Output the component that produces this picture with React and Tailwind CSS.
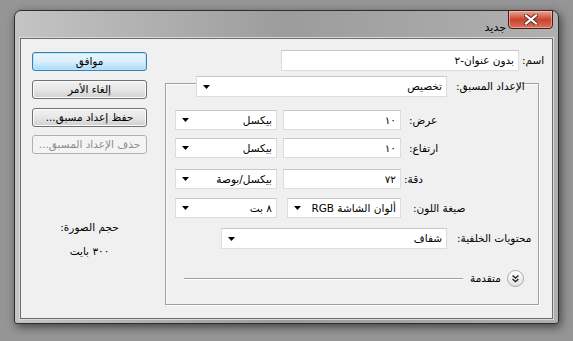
import React from "react";

const Arrow = () => (
  <svg width="7" height="4" viewBox="0 0 7 4" className="shrink-0">
    <path d="M0 0h7L3.5 4z" fill="#000" />
  </svg>
);

function Select({ className = "", value }) {
  return (
    <div
      className={`h-[20px] bg-white border border-[#dcdcdc] border-t-[#c8c8c8] flex items-center pl-[6px] pr-[4px] shrink-0 overflow-hidden ${className}`}
    >
      <Arrow />
      <span dir="rtl" className="flex-1 text-right whitespace-nowrap">
        {value}
      </span>
    </div>
  );
}

function Input({ className = "", value }) {
  return (
    <div
      className={`h-[20px] bg-white border border-[#dcdcdc] border-t-[#c8c8c8] flex items-center justify-end pr-[4px] shrink-0 ${className}`}
    >
      <span dir="rtl" className="whitespace-nowrap">
        {value}
      </span>
    </div>
  );
}

function Btn({ children, primary, disabled, className = "" }) {
  const look = primary
    ? "border-[#3c7fb1] bg-gradient-to-b from-[#eaf6fd] via-[#d9f0fc] to-[#a7d9f5] shadow-[inset_0_0_0_1px_#b7e4fb]"
    : disabled
    ? "border-[#adb2b5] bg-[#f4f4f4] text-[#8c8c8c]"
    : "border-[#707070] bg-gradient-to-b from-[#f2f2f2] via-[#e6e6e6] to-[#d0d0d0] shadow-[inset_0_0_0_1px_#fcfcfc]";
  return (
    <div
      dir="rtl"
      className={`w-[115px] h-[19px] rounded-[3px] border flex items-center justify-center ${look} ${className}`}
    >
      {children}
    </div>
  );
}

export default function App() {
  return (
    <div className="w-[573px] h-[341px] bg-[#959595] pl-[14px] pt-[10px] font-['DejaVu_Sans',sans-serif] text-[10.5px] text-black leading-none overflow-hidden">
      <div className="w-[545px] h-[314px] rounded-t-[7px] rounded-b-[3px] border border-[#2e2e2e] bg-gradient-to-r from-[#c4c4c4] via-[#9c9c9c] to-[#b0b0b0] shadow-[2px_3px_10px_rgba(0,0,0,0.55)] flex flex-col">
        {/* title bar */}
        <div className="h-[27px] flex justify-end items-start pr-[5px]">
          <span dir="rtl" className="mt-[11px] mr-[2px] text-[11px]">
            جديد
          </span>
          <div className="-mt-[1px] w-[45px] h-[19px] rounded-b-[4px] border border-[#4a1a14] bg-gradient-to-b from-[#e8a497] via-[#c9432f] to-[#d8705c] shadow-[inset_0_0_0_1px_rgba(255,220,210,0.5)] flex items-center justify-center">
            <svg width="14" height="11" viewBox="0 0 14 11">
              <path d="M2 1.5l10 8M12 1.5l-10 8" stroke="#5a2a22" strokeWidth="4" strokeLinecap="square" />
              <path d="M2 1.5l10 8M12 1.5l-10 8" stroke="#fff" strokeWidth="2.2" strokeLinecap="square" />
            </svg>
          </div>
        </div>

        {/* client area */}
        <div className="ml-[5px] mb-[4px] w-[533px] flex-1 border border-[#6e6e6e] bg-[#f0f0f0] shadow-[0_0_0_1px_#d8d8d8] flex">
          {/* left column */}
          <div className="ml-[11px] w-[115px] flex flex-col items-center">
            <Btn primary className="mt-[13px]">موافق</Btn>
            <Btn className="mt-[9px]">إلغاء الأمر</Btn>
            <Btn className="mt-[9px]">حفظ إعداد مسبق...</Btn>
            <Btn disabled className="mt-[8px]">حذف الإعداد المسبق...</Btn>
            <span dir="rtl" className="mt-[68px]">حجم الصورة:</span>
            <span dir="rtl" className="mt-[13px]">٣٠٠ بايت</span>
          </div>

          {/* right area */}
          <div className="ml-[18px] w-[375px] flex flex-col">
            <div className="mt-[11px] flex items-center">
              <Input className="ml-[116px] w-[238px] h-[21px]" value="بدون عنوان-٢" />
              <span dir="rtl" className="ml-[3px]">اسم:</span>
            </div>

            <div className="mt-[12px] w-[374px] h-[222px] border border-[#a0a0a0] shadow-[inset_1px_1px_0_#fff,1px_1px_0_#fff] flex flex-col">
              {/* legend */}
              <div className="-mt-[8px] ml-[30px] w-[326px] bg-[#f0f0f0] flex items-center">
                <Select className="w-[251px] h-[21px]" value="تخصيص" />
                <span dir="rtl" className="ml-[9px] whitespace-nowrap">الإعداد المسبق:</span>
              </div>

              <div className="ml-[9px] mt-[13px] flex items-center">
                <Select className="w-[102px]" value="بيكسل" />
                <Input className="ml-[6px] w-[118px]" value="١٠" />
                <span dir="rtl" className="ml-[8px]">عرض:</span>
              </div>
              <div className="ml-[9px] mt-[8px] flex items-center">
                <Select className="w-[102px]" value="بيكسل" />
                <Input className="ml-[6px] w-[118px]" value="١٠" />
                <span dir="rtl" className="ml-[8px]">ارتفاع:</span>
              </div>
              <div className="ml-[9px] mt-[11px] flex items-center">
                <Select className="w-[102px]" value="بيكسل/بوصة" />
                <Input className="ml-[6px] w-[118px]" value="٧٢" />
                <span dir="rtl" className="ml-[3px]">دقة:</span>
              </div>
              <div className="ml-[9px] mt-[9px] flex items-center">
                <Select className="w-[102px]" value="٨ بت" />
                <Select className="ml-[10px] w-[114px]" value="ألوان الشاشة RGB" />
                <span dir="rtl" className="ml-[12px] whitespace-nowrap">صيغة اللون:</span>
              </div>
              <div className="ml-[55px] mt-[10px] flex items-center">
                <Select className="w-[226px] h-[21px]" value="شفاف" />
                <span dir="rtl" className="ml-[10px] whitespace-nowrap">محتويات الخلفية:</span>
              </div>

              <div className="ml-[18px] mt-[21px] flex items-center">
                <div className="w-[279px] h-px bg-[#a0a0a0] shadow-[0_1px_0_#fff]" />
                <span dir="rtl" className="ml-[7px] whitespace-nowrap">متقدمة</span>
                <div className="ml-[6px] w-[17px] h-[17px] rounded-full border border-[#a8a8a8] bg-gradient-to-b from-white to-[#e2e2e2] flex items-center justify-center">
                  <svg width="9" height="9" viewBox="0 0 9 9">
                    <path d="M1.5 1.5l3 2.5 3-2.5M1.5 5l3 2.5 3-2.5" fill="none" stroke="#222" strokeWidth="1.4" />
                  </svg>
                </div>
              </div>
            </div>
          </div>
        </div>
      </div>
    </div>
  );
}
